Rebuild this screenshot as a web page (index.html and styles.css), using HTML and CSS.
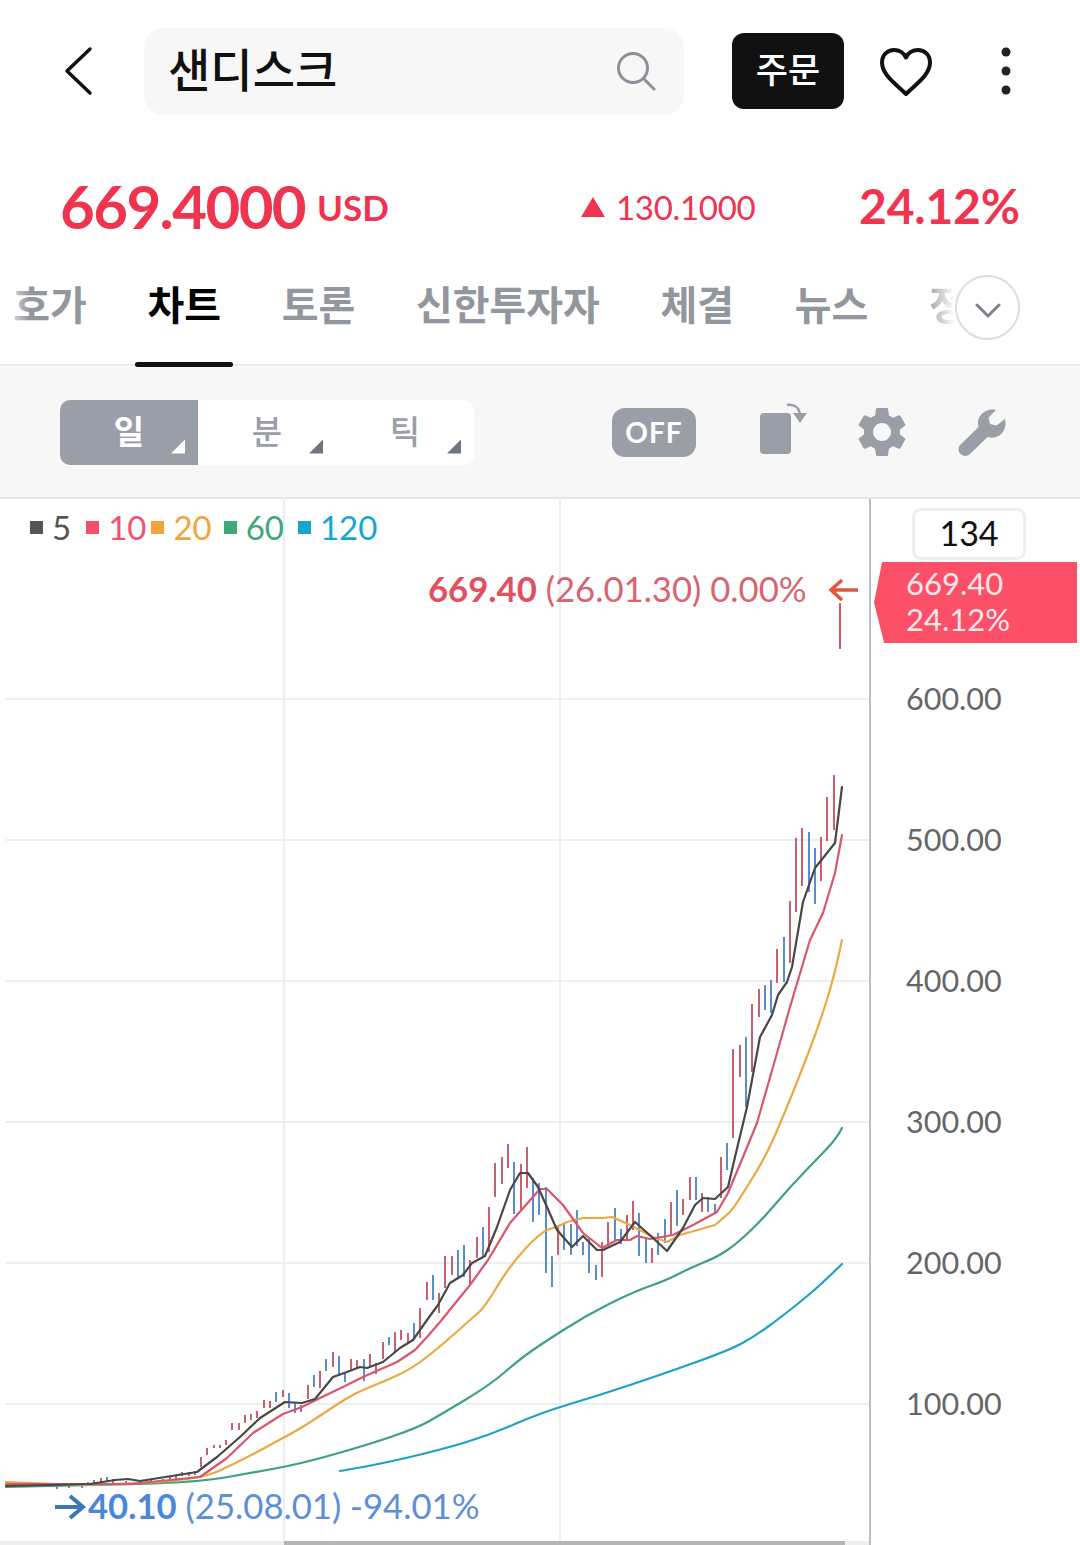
FILE: index.html
```html
<!DOCTYPE html>
<html lang="ko">
<head>
<meta charset="utf-8">
<title>샌디스크</title>
<link rel="stylesheet" href="styles.css">
</head>
<body>
<main class="page">
  <header class="topbar">
    <svg class="ic-back" viewBox="0 0 30 50"><path d="M26 3 3 25l23 22"/></svg>
    <div class="search">
      <span class="search-text">샌디스크</span>
      <svg class="ic-search" viewBox="0 0 40 40"><circle cx="17" cy="17" r="14.5"/><path d="M27.5 27.5 38 38"/></svg>
    </div>
    <button class="order">주문</button>
    <svg class="ic-heart" viewBox="0 0 54 50"><path d="M27 47C17 37 3 28 3 15.500 3 8 8.500 3 15 3c5 0 9.500 2.500 12 7.500C29.500 5.500 34 3 39 3c6.500 0 12 5 12 12.500C51 28 37 37 27 47Z"/></svg>
    <svg class="ic-more" viewBox="0 0 10 48"><circle cx="5" cy="5" r="4.500"/><circle cx="5" cy="24" r="4.500"/><circle cx="5" cy="43" r="4.500"/></svg>
  </header>

  <section class="quote">
    <div class="price"><span class="price-num">669.4000</span><span class="price-cur">USD</span></div>
    <div class="change"><svg class="ic-up" viewBox="0 0 24 20"><path d="M12 0 24 20H0Z"/></svg><span>130.1000</span></div>
    <div class="rate">24.12%</div>
  </section>

  <nav class="tabs">
    <a class="tab">호가</a>
    <a class="tab tab-on">차트</a>
    <a class="tab">토론</a>
    <a class="tab">신한투자자</a>
    <a class="tab">체결</a>
    <a class="tab">뉴스</a>
    <a class="tab">정보</a>
    <span class="fade-left"></span>
    <span class="fade-right"></span>
    <span class="expand"><svg viewBox="0 0 26 16"><path d="M2 2l11 11L24 2"/></svg></span>
  </nav>

  <section class="toolbar">
    <div class="segments">
      <span class="seg seg-on">일</span>
      <span class="seg">분</span>
      <span class="seg">틱</span>
    </div>
    <span class="off">OFF</span>
    <svg class="ic-rotate" viewBox="0 0 48 52"><rect x="0" y="11" width="31" height="41" rx="4"/><path class="rot-line" d="M27 3c8-1 13 3 13 11"/><path d="M33 11h14l-7 10Z"/></svg>
    <svg class="ic-gear" viewBox="2.500 2 19 20"><path fill-rule="evenodd" d="M19.140 12.940c.04-.3.06-.61.06-.94 0-.32-.02-.64-.07-.94l2.030-1.580c.18-.14.23-.41.12-.61l-1.920-3.320c-.12-.22-.37-.29-.59-.22l-2.390.96c-.5-.38-1.030-.7-1.620-.94l-.36-2.540c-.04-.24-.24-.41-.48-.41h-3.840c-.24 0-.43.17-.47.41l-.36 2.540c-.59.24-1.130.57-1.620.94l-2.390-.96c-.22-.08-.47 0-.59.22L2.740 8.870c-.12.21-.08.47.12.61l2.030 1.580c-.05.3-.09.63-.09.94s.02.64.07.94l-2.030 1.580c-.18.14-.23.41-.12.61l1.920 3.320c.12.22.37.29.59.22l2.390-.96c.5.38 1.030.7 1.620.94l.36 2.540c.05.24.24.41.48.41h3.840c.24 0 .44-.17.47-.41l.36-2.540c.59-.24 1.130-.56 1.620-.94l2.390.96c.22.08.47 0 .59-.22l1.920-3.320c.12-.22.07-.47-.12-.61l-2.010-1.580zM12 15.600c-1.980 0-3.600-1.620-3.600-3.600s1.620-3.600 3.600-3.600 3.600 1.620 3.600 3.600-1.620 3.600-3.600 3.600z"/></svg>
    <svg class="ic-wrench" viewBox="0 0 48 48"><path d="M47 11c1.500 7-.8 13.500-6.200 16.800-3.700 2.200-7.800 2.500-11.200 1.200L12 46c-2.800 2.600-7 2.500-9.600-.2-2.600-2.700-2.500-6.800.2-9.400l18-17.300c-1.300-3.900-.7-8 1.700-11.400C25.500 3.300 31.500.5 38 2l-7.500 7.500 1.500 6.500 6.500 1.500Z"/></svg>
  </section>

  <section class="chart">
    <div class="plot">
      <svg class="plot-svg" viewBox="0 497 870 1048" preserveAspectRatio="none">
        <path class="grid" d="M6 699H868M6 840H868M6 981H868M6 1122H868M6 1263H868M6 1404H868M284 497V1545M560 497V1545"/>
        <path class="bar-up" d="M88 1482V1486M101 1478V1482M113 1479V1484M126 1481V1484M138 1482V1485M151 1479V1483M163 1479V1482M170 1477V1481M176 1475V1480M182 1472V1476M189 1472V1476M195 1471V1475M201 1457V1467M207 1448V1455M214 1445V1448M220 1445V1448M226 1440V1445M232 1423V1430M239 1423V1430M245 1415V1423M251 1414V1420M257 1411V1418M264 1400V1408M270 1401V1408M283 1390V1397M301 1405V1412M308 1385V1399M320 1371V1388M333 1352V1367M351 1359V1371M357 1360V1368M370 1354V1368M376 1363V1374M383 1342V1359M395 1332V1352M401 1330V1340M408 1333V1343M420 1308V1338M427 1282V1300M439 1293V1313M445 1256V1288M452 1256V1275M470 1260V1284M477 1237V1258M489 1207V1252M495 1163V1197M502 1157V1184M508 1144V1168M521 1164V1210M527 1147V1188M558 1225V1255M602 1242V1277M608 1222V1246M627 1215V1241M633 1201V1230M652 1248V1263M671 1202V1235M683 1199V1215M690 1177V1200M702 1193V1212M721 1157V1198M733 1049V1138M740 1045V1077M752 1004V1072M759 989V1017M777 949V983M790 901V963M796 838V912M802 828V886M821 837V881M827 797V841M834 775V830"/>
        <path class="bar-up" d="M10 1482V1487M16 1482V1487M24 1483V1487M32 1484V1487"/>
        <path class="bar-down" d="M50 1484V1487M57 1485V1489M69 1485V1488M82 1485V1488M94 1480V1484M107 1477V1482M276 1392V1402M289 1393V1408M295 1403V1413M314 1375V1387M326 1359V1371M339 1356V1376M345 1372V1382M364 1359V1381M389 1337V1345M414 1323V1340M433 1275V1300M458 1250V1277M464 1245V1277M483 1227V1257M514 1162V1214M533 1178V1222M539 1183V1215M546 1187V1273M552 1256V1287M564 1223V1250M571 1224V1255M577 1210V1246M583 1242V1255M589 1239V1273M596 1265V1280M615 1208V1242M621 1229V1244M639 1213V1256M646 1239V1263M658 1233V1255M665 1219V1243M677 1190V1226M696 1177V1200M708 1197V1212M715 1204V1213M727 1143V1170M746 1037V1107M765 985V1010M771 980V1013M784 937V982M809 832V892M815 848V904"/>
        <path class="ma ma-120" d="M340 1471L360 1467.500Q380 1464 410 1457Q440 1450 465 1442.500Q490 1435 515 1424Q540 1413 570 1404Q600 1395 630 1385Q660 1375 695 1362.500Q730 1350 742.500 1343Q755 1336 767.500 1327Q780 1318 797.500 1304Q815 1290 828.500 1277L842 1264"/>
        <path class="ma ma-60" d="M6 1487L140 1484Q200 1482 225 1477.500Q250 1473 275 1468.500Q300 1464 333.500 1454.500Q367 1445 392 1436.500Q417 1428 428.500 1421.500Q440 1415 465 1400Q490 1385 505 1372Q520 1359 531.500 1351Q543 1343 565 1329Q587 1315 610 1303.500Q633 1292 650 1286Q667 1280 678.500 1274Q690 1268 703.500 1262.500Q717 1257 726 1251Q735 1245 747.500 1233.500Q760 1222 775 1204.500Q790 1187 804 1172.500Q818 1158 827.500 1148Q837 1138 842 1128"/>
        <path class="ma ma-20" d="M6 1482L83 1485 140 1483Q197 1480 215 1472.500Q233 1465 258 1451.500Q283 1438 293 1432.500Q303 1427 318 1417Q333 1407 345 1399.500Q357 1392 370 1387Q383 1382 398 1375Q413 1368 427.500 1356.500Q442 1345 456 1332.500Q470 1320 477.500 1313.500Q485 1307 497.500 1286Q510 1265 526 1248Q542 1231 549.500 1229Q557 1227 562 1224.500L567 1222 583 1218 603 1218 612 1217 630 1225 653 1237 667 1242 680 1235 715 1225 722 1219Q730 1213 735 1205.500Q740 1198 752.500 1178Q765 1158 774 1137.500Q783 1117 795 1087Q807 1057 815 1035Q823 1013 829 993Q835 973 842 940"/>
        <path class="ma ma-10" d="M6 1484 130 1484 200 1477 227 1458 253 1433 283 1414 302 1407 320 1398 343 1387 363 1377 397 1362 415 1350 427 1337 440 1322 470 1285 488 1260 510 1223 540 1189 547 1189 563 1205 583 1233 602 1248 617 1240 630 1240 637 1236 650 1239 673 1235 693 1225 717 1212 728 1193 743 1157 757 1123 777 1053 790 1007 810 940 823 913 835 873 842 835"/>
        <path class="ma ma-5" d="M6 1486 90 1484 115 1480 128 1479 140 1481 197 1472 217 1457 240 1437 260 1418 285 1402 302 1403 315 1399 333 1377 347 1372 360 1367 367 1368 383 1362 400 1348 413 1340 427 1320 438 1305 450 1283 463 1275 472 1263 485 1256 497 1227 510 1190 520 1173 528 1173 538 1187 547 1207 557 1230 572 1247 583 1236 597 1250 603 1250 620 1242 635 1222 653 1238 667 1251 683 1228 695 1205 703 1198 715 1199 728 1187 735 1157 747 1107 760 1037 772 1015 778 995 787 982 792 967 803 902 815 868 835 843 842 787"/>
        <path class="hi-stem" d="M840 603V649"/>
        <path class="hi-arrow" d="M858 590H832M842 580 831 590 842 600"/>
        <path class="lo-arrow" d="M55 1507H82M70 1496 83 1507 70 1518"/>
      </svg>
      <ul class="legend">
        <li class="lg lg-5">5</li>
        <li class="lg lg-10">10</li>
        <li class="lg lg-20">20</li>
        <li class="lg lg-60">60</li>
        <li class="lg lg-120">120</li>
      </ul>
      <p class="note note-hi"><b>669.40</b> (26.01.30) 0.00%</p>
      <p class="note note-lo"><b>40.10</b> (25.08.01) -94.01%</p>
      <span class="scroll"></span>
    </div>
    <aside class="axis">
      <div class="count">134</div>
      <div class="tag"><span>669.40</span><span>24.12%</span></div>
      <ul class="ticks">
        <li>600.00</li>
        <li>500.00</li>
        <li>400.00</li>
        <li>300.00</li>
        <li>200.00</li>
        <li>100.00</li>
      </ul>
    </aside>
  </section>
</main>
</body>
</html>
```

FILE: styles.css
```css
* { box-sizing: border-box; }
html, body { margin: 0; padding: 0; background: #fff; }
body { font-family: Lato, "Noto Sans CJK KR", sans-serif; }
ul { margin: 0; padding: 0; list-style: none; }
p { margin: 0; }

.page { width: 1080px; height: 1545px; overflow: hidden; display: flex; flex-direction: column; }

/* top bar */
.topbar { height: 143px; padding-top: 28px; padding-left: 64px; display: flex; align-items: flex-start; }
.ic-back { width: 30px; height: 50px; margin-top: 18px; fill: none; stroke: #111; stroke-width: 3.500; stroke-linecap: round; stroke-linejoin: round; }
.search { width: 540px; height: 87px; margin-left: 50px; padding: 0 28px 0 24px; background: #f7f7f7; border-radius: 20px; display: flex; align-items: center; justify-content: space-between; }
.search-text { font: 500 46px/1 "Noto Sans CJK KR", sans-serif; color: #111; margin-top: -10px; }
.ic-search { width: 40px; height: 40px; margin-top: -2px; fill: none; stroke: #8b9199; stroke-width: 3; stroke-linecap: round; }
.order { width: 112px; height: 76px; margin: 5px 0 0 48px; padding: 0 0 8px; border: 0; border-radius: 12px; background: #111; color: #fff; font: 500 35px/1 "Noto Sans CJK KR", sans-serif; }
.ic-heart { width: 54px; height: 50px; margin: 19px 0 0 35px; fill: none; stroke: #111; stroke-width: 4; stroke-linejoin: round; }
.ic-more { width: 10px; height: 48px; margin: 19px 0 0 68px; fill: #222; }

/* quote */
.quote { height: 128px; padding: 0 60px 0 60px; display: flex; align-items: center; color: #ef3450; }
.price { width: 521px; display: flex; align-items: center; margin-top: -2px; }
.price-num { font: 700 60px/1 Lato, sans-serif; letter-spacing: -1.600px; }
.price-cur { font: 700 35px/1 Lato, sans-serif; margin: 3px 0 0 12px; }
.change { width: 278px; display: flex; align-items: center; font: 400 33px/1 Lato, sans-serif; letter-spacing: -.3px; }
.ic-up { width: 24px; height: 20px; margin-right: 11px; fill: #ef3450; }
.rate { font: 700 48px/1 Lato, sans-serif; letter-spacing: -.2px; margin-top: -2px; }

/* tabs */
.tabs { position: relative; height: 96px; padding-left: 1px; display: flex; gap: 36px; overflow: hidden; background: linear-gradient(#e7e8e9, #e7e8e9) left bottom 1px / 100% 2px no-repeat; }
.tab { position: relative; flex: none; height: 100%; padding: 0 12.300px; font: 700 40px/64px "Noto Sans CJK KR", sans-serif; color: #92969d; }
.tab-on { color: #000; }
.tab-on::after { content: ""; position: absolute; left: 0; right: 0; bottom: 0; height: 5px; border-radius: 3px; background: #111; }
.fade-left { position: absolute; left: 0; top: 0; bottom: 3px; width: 30px; background: linear-gradient(90deg, #fff, rgba(255,255,255,0)); }
.fade-right { position: absolute; left: 925px; right: 0; top: 0; bottom: 3px; background: linear-gradient(90deg, rgba(255,255,255,0), #fff 30px); }
.expand { position: absolute; left: 955px; top: 4px; width: 65px; height: 65px; border: 2px solid #dcdde0; border-radius: 50%; background: #fff; display: flex; align-items: center; justify-content: center; }
.expand svg { width: 26px; height: 16px; margin-top: 6px; fill: none; stroke: #7d838c; stroke-width: 3; stroke-linecap: round; stroke-linejoin: round; }

/* toolbar */
.toolbar { height: 130px; padding-left: 60px; background: #f7f7f8; display: flex; align-items: center; }
.segments { width: 414px; height: 65px; display: flex; background: #fff; border-radius: 10px; overflow: hidden; }
.seg { position: relative; flex: 1; text-align: center; font: 500 33px/60px "Noto Sans CJK KR", sans-serif; color: #9a9ea6; }
.seg::after { content: ""; position: absolute; right: 13px; bottom: 11px; width: 14px; height: 14px; background: #6f7580; clip-path: polygon(100% 0, 100% 100%, 0 100%); }
.seg-on { background: #9a9ea6; color: #fff; font-weight: 700; }
.seg-on::after { background: #fff; }
.off { width: 84px; height: 49px; margin-left: 138px; border-radius: 13px; background: #9a9ea6; color: #fff; text-align: center; font: 700 28px/49px Lato, sans-serif; letter-spacing: 1px; }
.ic-rotate { width: 48px; height: 52px; margin: -8px 0 0 64px; fill: #9a9ea6; }
.rot-line { fill: none; stroke: #9a9ea6; stroke-width: 2.500; }
.ic-gear { width: 48px; height: 50px; margin-left: 50px; fill: #9a9ea6; }
.ic-wrench { width: 48px; height: 48px; margin-left: 52px; fill: #9a9ea6; }

/* chart */
.chart { flex: 1; display: grid; grid-template-columns: 869px 211px; border-top: 2px solid #e4e5e6; min-height: 0; }
.plot { position: relative; padding: 9px 0 0 30px; }
.plot-svg { position: absolute; left: 0; top: -2px; width: 870px; height: 1048px; }
.grid { fill: none; stroke: #eeeeee; stroke-width: 2; }
.bar-up { fill: none; stroke: #c9606f; stroke-width: 2; }
.bar-down { fill: none; stroke: #5b8ccc; stroke-width: 2; }
.ma { fill: none; stroke-width: 2.200; stroke-linejoin: round; stroke-linecap: round; }
.ma-5 { stroke: #474747; }
.ma-10 { stroke: #d9566f; }
.ma-20 { stroke: #eba944; }
.ma-60 { stroke: #3ea27b; }
.ma-120 { stroke: #1fa2c2; }
.hi-stem { fill: none; stroke: #d9566f; stroke-width: 2; }
.hi-arrow { fill: none; stroke: #e2553f; stroke-width: 3.500; }
.lo-arrow { fill: none; stroke: #3b76b9; stroke-width: 4; }

.legend { position: relative; display: flex; gap: 15px; font-size: 33px; line-height: 38px; }
.lg { display: flex; align-items: center; gap: 9px; }
.lg::before { content: ""; width: 13px; height: 13px; background: currentColor; }
.lg-5 { color: #555; }
.lg-10 { color: #f2506c; }
.lg-20 { color: #eea53c; margin-left: -10px; }
.lg-60 { color: #3ea87c; margin-left: -3px; }
.lg-120 { color: #17a6cf; margin-left: -1px; }

.note { position: absolute; white-space: nowrap; font-size: 34.700px; line-height: 40px; }
.note-hi { left: 428px; top: 70px; color: #d9646f; }
.note-hi b { color: #e2505f; }
.note-lo { left: 88px; top: 987px; color: #5c8fd6; }
.note-lo b { color: #4a86de; }
.scroll { position: absolute; left: 0; right: 0; bottom: 0; height: 4px; background: linear-gradient(90deg, #eee 284px, #b5b5b5 284px, #b5b5b5 845px, #eee 845px); }

.axis { position: relative; background: #fff; border-left: 2px solid #bdbdbd; padding-top: 9px; color: #666; }
.count { width: 114px; height: 52px; margin-left: 41px; border: 3px solid #eeeeee; border-radius: 9px; text-align: center; font: 400 34px/44px Lato, sans-serif; color: #111; }
.tag { width: 203px; height: 81px; margin: 2px 0 0 3px; padding: 3px 0 0 32px; background: #fb5067; color: #fde9eb; clip-path: polygon(4% 0, 100% 0, 100% 100%, 5% 100%, 0 50%); display: flex; flex-direction: column; font-size: 31px; line-height: 36px; }
.ticks { margin-top: 35px; padding-left: 35px; display: flex; flex-direction: column; gap: 101px; font-size: 30.500px; line-height: 40px; }
```
